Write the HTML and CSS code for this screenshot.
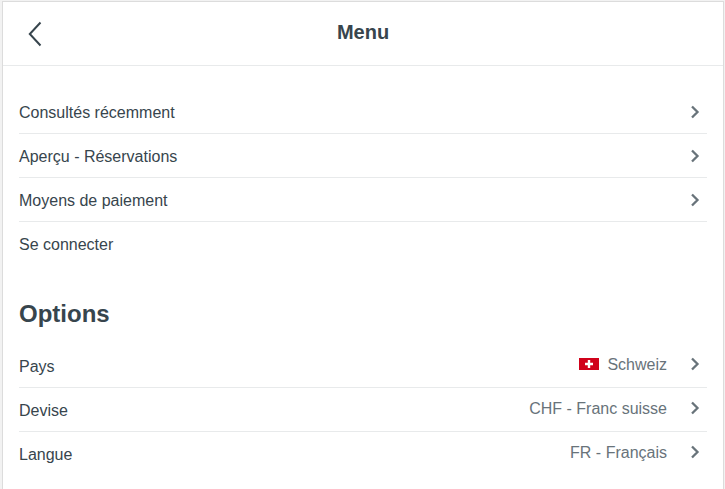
FILE: index.html
```html
<!DOCTYPE html>
<html lang="fr">
<head>
<meta charset="utf-8">
<title>Menu</title>
<link rel="stylesheet" href="styles.css">
</head>
<body>
<svg width="0" height="0" class="defs" aria-hidden="true">
  <symbol id="chevron" viewBox="0 0 10 14"><path d="M2 1.5 7.5 7 2 12.5"/></symbol>
</svg>
<div class="panel">
  <header class="header">
    <svg class="back" viewBox="0 0 14 26"><path d="M12.5 1.5 1.8 13 12.5 24.5"/></svg>
    <h1 class="title">Menu</h1>
  </header>
  <main class="content">
    <ul class="list">
      <li class="row"><span class="label">Consultés récemment</span><svg class="chevron"><use href="#chevron"/></svg></li>
      <li class="row"><span class="label">Aperçu - Réservations</span><svg class="chevron"><use href="#chevron"/></svg></li>
      <li class="row"><span class="label">Moyens de paiement</span><svg class="chevron"><use href="#chevron"/></svg></li>
      <li class="row"><span class="label">Se connecter</span></li>
    </ul>
    <h2 class="heading">Options</h2>
    <ul class="list options">
      <li class="row"><span class="label">Pays</span><span class="value"><svg class="flag" viewBox="0 0 20 12"><path fill="#d0021b" d="M0 0h20v12H0z"/><path fill="#fff" d="M8.8 2h2.4v2.8H14v2.4h-2.8V10H8.8V7.200H6V4.800h2.800z"/></svg>Schweiz</span><svg class="chevron"><use href="#chevron"/></svg></li>
      <li class="row"><span class="label">Devise</span><span class="value">CHF - Franc suisse</span><svg class="chevron"><use href="#chevron"/></svg></li>
      <li class="row"><span class="label">Langue</span><span class="value">FR - Français</span><svg class="chevron"><use href="#chevron"/></svg></li>
    </ul>
  </main>
</div>
</body>
</html>
```
FILE: styles.css
```css
* { box-sizing: border-box; }

body {
  margin: 0;
  height: 489px;
  padding: 1px 1px 0 2px;
  overflow: hidden;
  background: #f2f2f2;
  color: #37454d;
  font: 16px/24px "Liberation Sans", Arial, sans-serif;
}

.defs { position: absolute; }

.panel {
  height: 500px;
  background: #fff;
  border: 1px solid #dcdcdc;
}

.header {
  display: grid;
  grid-template-columns: 64px 1fr 64px;
  align-items: center;
  height: 64px;
  border-bottom: 1px solid #e8eaeb;
}

.back {
  width: 14px;
  height: 26px;
  margin-left: 25px;
  fill: none;
  stroke: #37454d;
  stroke-width: 2;
}

.title {
  margin: 0;
  padding-bottom: 3px;
  font-size: 20px;
  line-height: 24px;
  text-align: center;
}

.content { padding: 24px 16px 0; }

.list {
  margin: 0;
  padding: 0;
  list-style: none;
}

.row {
  display: flex;
  align-items: center;
  height: 44px;
  border-bottom: 1px solid #e8eaeb;
}

.row:last-child { border-bottom-color: transparent; }

.label { padding-top: 2px; }

.chevron {
  width: 10px;
  height: 14px;
  margin: 0 7px 0 auto;
  fill: none;
  stroke: #68737a;
  stroke-width: 2.3;
}

.heading {
  margin: 30px 0 12px;
  font-size: 24px;
  line-height: 36px;
}

.value {
  display: flex;
  align-items: center;
  margin: 0 23px 4px auto;
  padding-top: 2px;
  color: #68737a;
}

.options .chevron { margin: 0 7px 4px 0; }

.flag {
  width: 20px;
  height: 12px;
  margin: 0 8px 2px 0;
}
```
